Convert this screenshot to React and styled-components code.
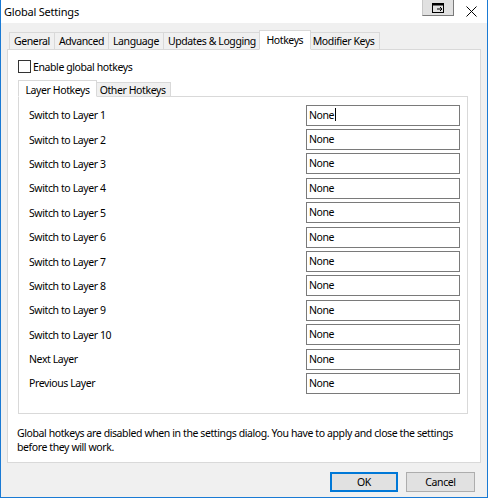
import React from "react";
import styled, { createGlobalStyle } from "styled-components";

const Global = createGlobalStyle`
  html, body { margin: 0; padding: 0; background: #ffffff; }
  body { font-family: "Noto Sans", "Liberation Sans", sans-serif; font-size: 10.5px; letter-spacing: -0.4px; color: #000; }
  * { box-sizing: border-box; }
`;

const Window = styled.div`
  width: 488px;
  height: 498px;
  border-left: 1px solid #1a7ad4;
  border-right: 1px solid #1a7ad4;
  border-bottom: 1px solid #1a7ad4;
  display: flex;
  flex-direction: column;
  background: #f0f0f0;
`;

const TitleBar = styled.div`
  height: 23px;
  background: #ffffff;
  display: flex;
  align-items: flex-start;
`;

const Title = styled.div`
  font-size: 11px;
  letter-spacing: -0.2px;
  padding: 4px 0 0 3px;
  flex: 1;
`;

const CaptionButton = styled.div`
  width: 32px;
  height: 16px;
  margin-right: 10px;
  background: #e1e1e1;
  border: 1px solid #c8c8c8;
  border-top: none;
  border-right-color: #7a7a7a;
  border-bottom-color: #7a7a7a;
  display: flex;
  align-items: center;
  justify-content: center;
`;

const CloseButton = styled.div`
  width: 14px;
  height: 16px;
  margin: 6px 9px 0 0;
  display: flex;
  align-items: flex-start;
  justify-content: center;
`;

const Body = styled.div`
  flex: 1;
  display: flex;
  flex-direction: column;
  padding: 7px 7px 0 6px;
`;

const TabStrip = styled.div`
  display: flex;
  align-items: flex-end;
  padding-left: ${(p) => p.$inset}px;
  height: ${(p) => p.$h}px;
  flex-shrink: 0;
  position: relative;
  z-index: 1;
`;

const Tab = styled.div`
  height: ${(p) => (p.$active ? p.$h + 2 : p.$h)}px;
  padding: ${(p) => (p.$active ? "2px 6.5px 0" : `0 ${p.$pad}px`)};
  margin-bottom: -1px;
  margin-left: ${(p) => (p.$first ? (p.$active ? -2 : 0) : p.$active ? -2 : -1)}px;
  margin-right: ${(p) => (p.$active ? -2 : 0)}px;
  background: ${(p) => (p.$active ? "#ffffff" : "#f0f0f0")};
  border: 1px solid #d9d9d9;
  border-bottom-color: ${(p) => (p.$active ? "#ffffff" : "#d9d9d9")};
  display: flex;
  align-items: ${(p) => (p.$active ? "flex-start" : "center")};
  white-space: nowrap;
  position: relative;
  z-index: ${(p) => (p.$active ? 2 : 1)};
`;

const OuterPanel = styled.div`
  background: #ffffff;
  border: 1px solid #d9d9d9;
  display: flex;
  flex-direction: column;
  width: 474px;
  height: 414px;
  padding: 10px 12px 0 10px;
`;

const CheckRow = styled.label`
  display: flex;
  align-items: center;
  gap: 2px;
  height: 13px;
  margin-bottom: 5px;
`;

const CheckBox = styled.span`
  width: 13px;
  height: 13px;
  border: 1px solid #333333;
  background: #ffffff;
`;

const InnerPanel = styled.div`
  background: #ffffff;
  border: 1px solid #d9d9d9;
  display: flex;
  flex-direction: column;
  height: 318px;
  flex-shrink: 0;
  padding: 6px 7px 0 10px;
`;

const Row = styled.div`
  display: flex;
  align-items: center;
  justify-content: space-between;
  height: 24.4px;
  flex-shrink: 0;
`;

const Field = styled.div`
  width: 154px;
  height: 21px;
  border: 1px solid #7a7a7a;
  background: #fff;
  padding: 2px 0 0 2px;
  display: flex;
  align-items: flex-start;
`;

const Caret = styled.span`
  display: inline-block;
  width: 1px;
  height: 13px;
  background: #000;
  margin-left: 1px;
`;

const Note = styled.div`
  padding: 13px 0 0 0;
  margin-left: -1px;
  line-height: 13.5px;
  white-space: nowrap;
`;

const Footer = styled.div`
  display: flex;
  justify-content: flex-end;
  gap: 8px;
  padding: 9px 5px 0 0;
`;

const Button = styled.div`
  width: ${(p) => (p.$primary ? 68 : 69)}px;
  height: 20px;
  background: #e1e1e1;
  border: ${(p) => (p.$primary ? "2px solid #0078d7" : "1px solid #adadad")};
  display: flex;
  align-items: center;
  justify-content: center;
`;

const outerTabs = ["General", "Advanced", "Language", "Updates & Logging", "Hotkeys", "Modifier Keys"];
const rows = [
  "Switch to Layer 1",
  "Switch to Layer 2",
  "Switch to Layer 3",
  "Switch to Layer 4",
  "Switch to Layer 5",
  "Switch to Layer 6",
  "Switch to Layer 7",
  "Switch to Layer 8",
  "Switch to Layer 9",
  "Switch to Layer 10",
  "Next Layer",
  "Previous Layer",
];

export default function App() {
  return (
    <>
      <Global />
      <Window>
        <TitleBar>
          <Title>Global Settings</Title>
          <CaptionButton>
            <svg width="13" height="10" viewBox="0 0 13 10">
              <rect x="0.5" y="0.5" width="11" height="9" fill="none" stroke="#000" />
              <rect x="0.5" y="0.5" width="11" height="2" fill="#000" />
              <path d="M5 6 H10 M8 4 L10 6 L8 8" stroke="#000" fill="none" />
            </svg>
          </CaptionButton>
          <CloseButton>
            <svg width="11" height="11" viewBox="0 0 11 11">
              <path d="M0.5 0.5 L10.5 10.5 M10.5 0.5 L0.5 10.5" stroke="#000" strokeWidth="1" />
            </svg>
          </CloseButton>
        </TitleBar>
        <Body>
          <TabStrip $inset={2} $h={19}>
            {outerTabs.map((t, i) => (
              <Tab key={t} $h={18} $pad={4} $first={i === 0} $active={t === "Hotkeys"}>
                {t}
              </Tab>
            ))}
          </TabStrip>
          <OuterPanel>
            <CheckRow>
              <CheckBox />
              <span>Enable global hotkeys</span>
            </CheckRow>
            <TabStrip $inset={2} $h={18}>
              <Tab $h={15} $pad={4.5} $first $active>Layer Hotkeys</Tab>
              <Tab $h={15} $pad={4.5}>Other Hotkeys</Tab>
            </TabStrip>
            <InnerPanel>
              {rows.map((r, i) => (
                <Row key={r}>
                  <span>{r}</span>
                  <Field>
                    None{i === 0 && <Caret />}
                  </Field>
                </Row>
              ))}
            </InnerPanel>
            <Note>
              Global hotkeys are disabled when in the settings dialog. You have to apply and close the settings
              <br />
              before they will work.
            </Note>
          </OuterPanel>
          <Footer>
            <Button $primary>OK</Button>
            <Button>Cancel</Button>
          </Footer>
        </Body>
      </Window>
    </>
  );
}
